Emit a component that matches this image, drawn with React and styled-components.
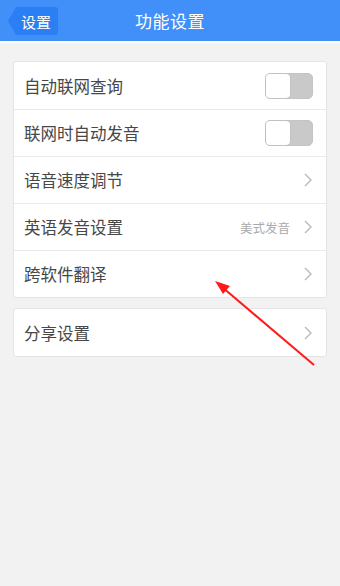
import React from "react";
import styled, { createGlobalStyle } from "styled-components";

const Global = createGlobalStyle`
  html, body { margin: 0; padding: 0; background: #f2f2f2; }
  body { font-family: "Noto Sans CJK SC", "Noto Sans", sans-serif; }
  * { box-sizing: border-box; }
`;

const Page = styled.div`
  position: relative;
  width: 340px;
  height: 586px;
  background: #f2f2f2;
  overflow: hidden;
`;

const Header = styled.header`
  position: relative;
  height: 41px;
  background: #418ff9;
  display: flex;
  align-items: center;
  justify-content: center;
  border-bottom: 2px solid #ffffff;
  box-sizing: content-box;
`;

const Title = styled.h1`
  margin: 0;
  font-size: 17px;
  font-weight: normal;
  color: #ffffff;
  letter-spacing: 0.5px;
`;

const Back = styled.button`
  position: absolute;
  left: 8px;
  top: 7px;
  height: 28px;
  width: 50px;
  border: none;
  padding: 0 0 0 6px;
  background: #2b7ff5;
  color: #ffffff;
  font-family: inherit;
  font-size: 15px;
  clip-path: polygon(8px 0, 100% 0, 100% 100%, 8px 100%, 0 50%);
  border-radius: 0 3px 3px 0;
  display: flex;
  align-items: center;
  justify-content: center;
`;

const Content = styled.main`
  padding: 18px 13px 0 13px;
  display: flex;
  flex-direction: column;
  gap: 10px;
`;

const Card = styled.section`
  background: #ffffff;
  border: 1px solid #e4e4e4;
  border-radius: 3px;
  display: flex;
  flex-direction: column;
`;

const Row = styled.div`
  height: 47px;
  display: flex;
  align-items: center;
  padding: 0 14px 0 10px;
  & + & { border-top: 1px solid #ebebeb; }
`;

const Label = styled.span`
  flex: 1;
  font-size: 16.5px;
  color: #474747;
`;

const Value = styled.span`
  font-size: 12.5px;
  color: #aaaaaa;
  margin-right: 14px;
`;

const Toggle = styled.div`
  width: 48px;
  height: 26px;
  border-radius: 5px;
  background: #c9c9c9;
  border: 1px solid #c4c4c4;
  display: flex;
  margin-right: -1px;
`;

const Knob = styled.div`
  width: 24px;
  height: 24px;
  background: #ffffff;
  border-radius: 4px;
  box-shadow: 0 0 0 0.5px #bdbdbd;
`;

const Chevron = () => (
  <svg width="8" height="14" viewBox="0 0 8 14">
    <path d="M1 1 L7 7 L1 13" fill="none" stroke="#bdbdbd" strokeWidth="1.5" />
  </svg>
);

const Overlay = styled.svg`
  position: absolute;
  left: 0;
  top: 0;
  pointer-events: none;
`;

const ToggleRow = ({ label }) => (
  <Row>
    <Label>{label}</Label>
    <Toggle>
      <Knob />
    </Toggle>
  </Row>
);

const LinkRow = ({ label, value }) => (
  <Row>
    <Label>{label}</Label>
    {value && <Value>{value}</Value>}
    <Chevron />
  </Row>
);

export default function App() {
  return (
    <>
      <Global />
      <Page>
        <Header>
          <Back>设置</Back>
          <Title>功能设置</Title>
        </Header>
        <Content>
          <Card>
            <ToggleRow label="自动联网查询" />
            <ToggleRow label="联网时自动发音" />
            <LinkRow label="语音速度调节" />
            <LinkRow label="英语发音设置" value="美式发音" />
            <LinkRow label="跨软件翻译" />
          </Card>
          <Card>
            <LinkRow label="分享设置" />
          </Card>
        </Content>
        <Overlay width="340" height="586" viewBox="0 0 340 586">
          <line x1="314" y1="365" x2="222" y2="287" stroke="#ff1a1a" strokeWidth="2" />
          <polygon points="215,281 230,286 223,294" fill="#ff1a1a" />
        </Overlay>
      </Page>
    </>
  );
}
